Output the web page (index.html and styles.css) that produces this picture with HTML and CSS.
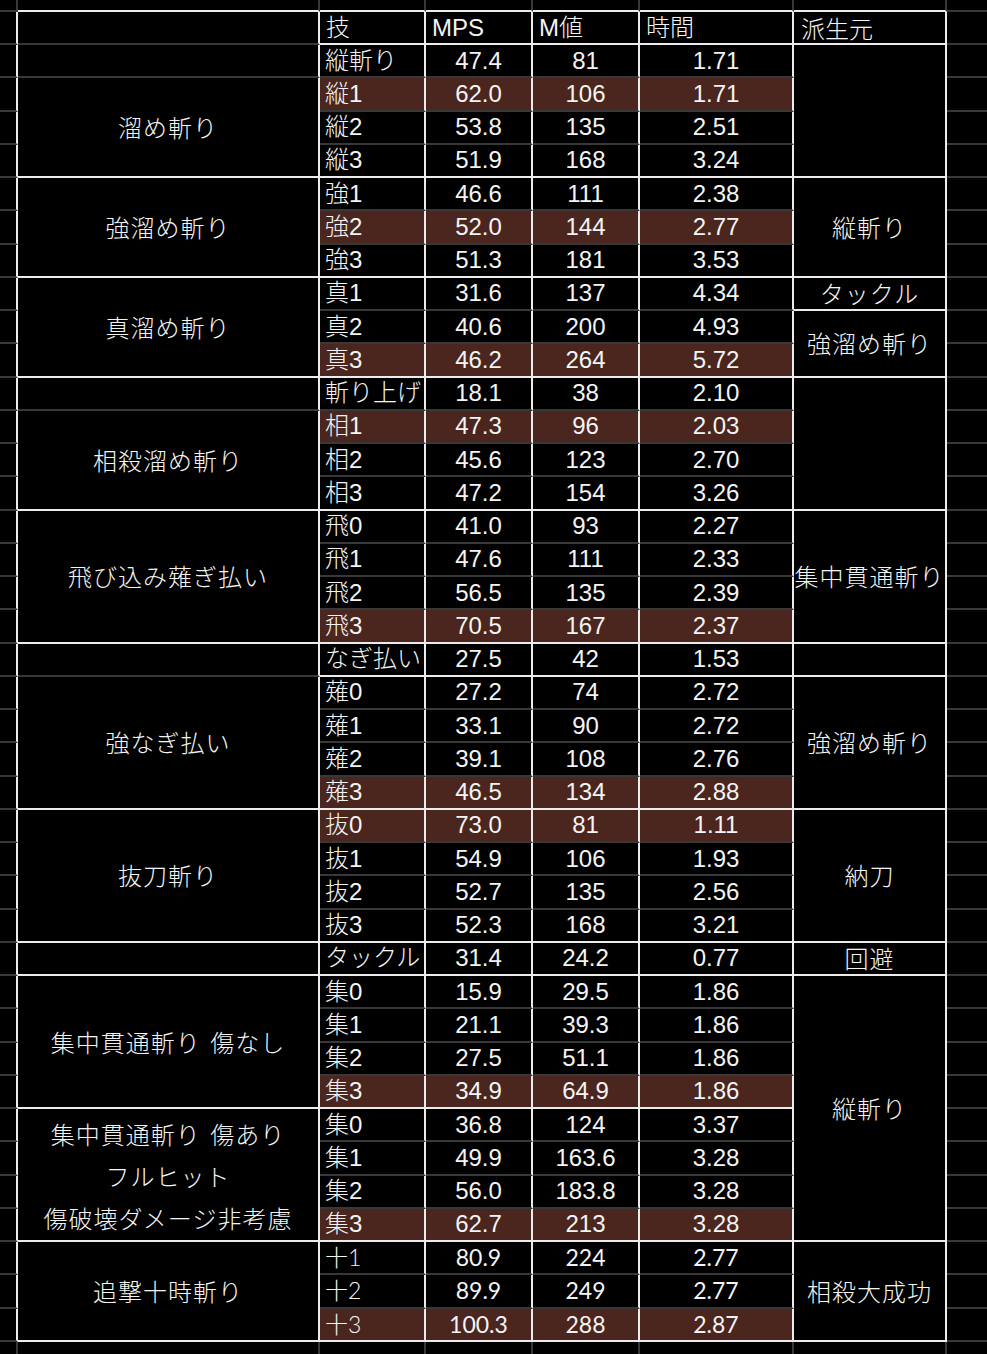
FILE: index.html
```html
<!DOCTYPE html>
<html lang="ja">
<head>
<meta charset="utf-8">
<title>MPS</title>
<link rel="stylesheet" href="styles.css">
</head>
<body>
<div class="sheet">
  <div class="row top"><span class="l"></span><span></span><span></span><span></span><span></span><span></span><span></span><span class="r"></span></div>
  <div class="row wb hdr"><span class="l"></span><span class="a g"></span><span class="k">技</span><span class="k">MPS</span><span class="k">M値</span><span class="k">時間</span><span class="f k">派生元</span><span class="r"></span></div>

  <div class="row"><span class="l"></span><span class="a g"></span><span class="k">縦斬り</span><span>47.4</span><span>81</span><span>1.71</span><span class="f s4"></span><span class="r"></span></div>
  <div class="row hl"><span class="l"></span><span class="a s3">溜め斬り</span><span class="k">縦1</span><span>62.0</span><span>106</span><span>1.71</span><span class="r"></span></div>
  <div class="row"><span class="l"></span><span class="k">縦2</span><span>53.8</span><span>135</span><span>2.51</span><span class="r"></span></div>
  <div class="row wb"><span class="l"></span><span class="k">縦3</span><span>51.9</span><span>168</span><span>3.24</span><span class="r"></span></div>

  <div class="row"><span class="l"></span><span class="a s3">強溜め斬り</span><span class="k">強1</span><span>46.6</span><span>111</span><span>2.38</span><span class="f s3">縦斬り</span><span class="r"></span></div>
  <div class="row hl"><span class="l"></span><span class="k">強2</span><span>52.0</span><span>144</span><span>2.77</span><span class="r"></span></div>
  <div class="row wb"><span class="l"></span><span class="k">強3</span><span>51.3</span><span>181</span><span>3.53</span><span class="r"></span></div>

  <div class="row"><span class="l"></span><span class="a s3">真溜め斬り</span><span class="k">真1</span><span>31.6</span><span>137</span><span>4.34</span><span class="f">タックル</span><span class="r"></span></div>
  <div class="row"><span class="l"></span><span class="k">真2</span><span>40.6</span><span>200</span><span>4.93</span><span class="f s2">強溜め斬り</span><span class="r"></span></div>
  <div class="row hl wb"><span class="l"></span><span class="k">真3</span><span>46.2</span><span>264</span><span>5.72</span><span class="r"></span></div>

  <div class="row"><span class="l"></span><span class="a g"></span><span class="k">斬り上げ</span><span>18.1</span><span>38</span><span>2.10</span><span class="f s4"></span><span class="r"></span></div>
  <div class="row hl"><span class="l"></span><span class="a s3">相殺溜め斬り</span><span class="k">相1</span><span>47.3</span><span>96</span><span>2.03</span><span class="r"></span></div>
  <div class="row"><span class="l"></span><span class="k">相2</span><span>45.6</span><span>123</span><span>2.70</span><span class="r"></span></div>
  <div class="row wb"><span class="l"></span><span class="k">相3</span><span>47.2</span><span>154</span><span>3.26</span><span class="r"></span></div>

  <div class="row"><span class="l"></span><span class="a s4">飛び込み薙ぎ払い</span><span class="k">飛0</span><span>41.0</span><span>93</span><span>2.27</span><span class="f s4">集中貫通斬り</span><span class="r"></span></div>
  <div class="row"><span class="l"></span><span class="k">飛1</span><span>47.6</span><span>111</span><span>2.33</span><span class="r"></span></div>
  <div class="row"><span class="l"></span><span class="k">飛2</span><span>56.5</span><span>135</span><span>2.39</span><span class="r"></span></div>
  <div class="row hl wb"><span class="l"></span><span class="k">飛3</span><span>70.5</span><span>167</span><span>2.37</span><span class="r"></span></div>

  <div class="row wb"><span class="l"></span><span class="a g"></span><span class="k">なぎ払い</span><span>27.5</span><span>42</span><span>1.53</span><span class="f"></span><span class="r"></span></div>
  <div class="row"><span class="l"></span><span class="a s4">強なぎ払い</span><span class="k">薙0</span><span>27.2</span><span>74</span><span>2.72</span><span class="f s4">強溜め斬り</span><span class="r"></span></div>
  <div class="row"><span class="l"></span><span class="k">薙1</span><span>33.1</span><span>90</span><span>2.72</span><span class="r"></span></div>
  <div class="row"><span class="l"></span><span class="k">薙2</span><span>39.1</span><span>108</span><span>2.76</span><span class="r"></span></div>
  <div class="row hl wb"><span class="l"></span><span class="k">薙3</span><span>46.5</span><span>134</span><span>2.88</span><span class="r"></span></div>

  <div class="row hl"><span class="l"></span><span class="a s4">抜刀斬り</span><span class="k">抜0</span><span>73.0</span><span>81</span><span>1.11</span><span class="f s4">納刀</span><span class="r"></span></div>
  <div class="row"><span class="l"></span><span class="k">抜1</span><span>54.9</span><span>106</span><span>1.93</span><span class="r"></span></div>
  <div class="row"><span class="l"></span><span class="k">抜2</span><span>52.7</span><span>135</span><span>2.56</span><span class="r"></span></div>
  <div class="row wb"><span class="l"></span><span class="k">抜3</span><span>52.3</span><span>168</span><span>3.21</span><span class="r"></span></div>

  <div class="row wb"><span class="l"></span><span class="a"></span><span class="k">タックル</span><span>31.4</span><span>24.2</span><span>0.77</span><span class="f">回避</span><span class="r"></span></div>

  <div class="row"><span class="l"></span><span class="a s4">集中貫通斬り 傷なし</span><span class="k">集0</span><span>15.9</span><span>29.5</span><span>1.86</span><span class="f s8">縦斬り</span><span class="r"></span></div>
  <div class="row"><span class="l"></span><span class="k">集1</span><span>21.1</span><span>39.3</span><span>1.86</span><span class="r"></span></div>
  <div class="row"><span class="l"></span><span class="k">集2</span><span>27.5</span><span>51.1</span><span>1.86</span><span class="r"></span></div>
  <div class="row hl wb"><span class="l"></span><span class="k">集3</span><span>34.9</span><span>64.9</span><span>1.86</span><span class="r"></span></div>

  <div class="row"><span class="l"></span><span class="a s4 multi">集中貫通斬り 傷あり<br>フルヒット<br>傷破壊ダメージ非考慮</span><span class="k">集0</span><span>36.8</span><span>124</span><span>3.37</span><span class="r"></span></div>
  <div class="row"><span class="l"></span><span class="k">集1</span><span>49.9</span><span>163.6</span><span>3.28</span><span class="r"></span></div>
  <div class="row"><span class="l"></span><span class="k">集2</span><span>56.0</span><span>183.8</span><span>3.28</span><span class="r"></span></div>
  <div class="row hl wb"><span class="l"></span><span class="k">集3</span><span>62.7</span><span>213</span><span>3.28</span><span class="r"></span></div>

  <div class="row ca"><span class="l"></span><span class="a s3">追撃十時斬り</span><span class="k">十1</span><span>80.9</span><span>224</span><span>2.77</span><span class="f s3">相殺大成功</span><span class="r"></span></div>
  <div class="row ca"><span class="l"></span><span class="k">十2</span><span>89.9</span><span>249</span><span>2.77</span><span class="r"></span></div>
  <div class="row ca hl wb"><span class="l"></span><span class="k">十3</span><span>100.3</span><span>288</span><span>2.87</span><span class="r"></span></div>

  <div class="row bot"><span class="l"></span><span></span><span></span><span></span><span></span><span></span><span></span><span class="r"></span></div>
</div>
</body>
</html>
```

FILE: styles.css
```css
:root {
  --g: #383838;
  --w: #ececec;
  --hl: #4a261f;
}

html, body {
  margin: 0;
  padding: 0;
  background: #000;
}

body {
  width: 987px;
  height: 1354px;
  overflow: hidden;
}

.sheet {
  display: grid;
  grid-template-columns: 18px 302px 106px 107px 107px 154px 153px 1fr;
  grid-template-rows: 12px 33px repeat(39, 33.256px) 1fr;
  height: 1354px;
  color: #f4f4f4;
  font-family: "Liberation Sans", "Noto Sans CJK JP", sans-serif;
  font-size: 24px;
  font-weight: 300;
}

.row {
  display: contents;
}

.row > span {
  box-sizing: border-box;
  min-width: 0;
  display: flex;
  align-items: center;
  justify-content: center;
  white-space: nowrap;
  line-height: 1;
  border-right: 2px solid var(--w);
  border-bottom: 2px solid var(--g);
}

.row > .r {
  border-right: 0;
}

.row.wb > span:not(.l):not(.r):not(.a):not(.f) {
  border-bottom-color: var(--w);
}

.row.hl > span:not(.l):not(.r):not(.a):not(.f) {
  background: var(--hl);
}

/* group column (A) and origin column (F) */
.row > .a,
.row > .f {
  border-bottom-color: var(--w);
  font-family: "Noto Sans CJK JP", sans-serif;
  letter-spacing: 1px;
}

.row > .a.g {
  border-bottom-color: var(--g);
}

.row > .a {
  text-align: center;
  word-spacing: 3px;
}

.row > .multi {
  line-height: 42px;
  padding-top: 2px;
}

.row > .k {
  justify-content: flex-start;
  padding-left: 5px;
}

.hdr > .k {
  padding-left: 6px;
}

.hdr > .f.k {
  padding-left: 7px;
  letter-spacing: 0;
}

.s2 { grid-row: span 2; }
.s3 { grid-row: span 3; }
.s4 { grid-row: span 4; }
.s8 { grid-row: span 8; }

/* Calibri-like figures in the last group */
.row.ca > span {
  font-family: "Lato", "Noto Sans CJK JP", sans-serif;
  font-size: 23px;
  font-weight: 400;
}

.row.ca > .k {
  font-weight: 300;
}

.row.ca > .a,
.row.ca > .f {
  font-family: "Noto Sans CJK JP", sans-serif;
  font-size: 24px;
  font-weight: 300;
}

/* spreadsheet margins outside the table */
.row.top > span {
  border-right-color: var(--g);
  border-bottom-color: var(--w);
}

.row.top > .l,
.row.top > .r {
  border-bottom-color: var(--g);
}

.row.top > .r {
  border-right: 0;
}

.row.bot > span {
  border-right-color: var(--g);
  border-bottom: 0;
}

.row.bot > .r {
  border-right: 0;
}
```
